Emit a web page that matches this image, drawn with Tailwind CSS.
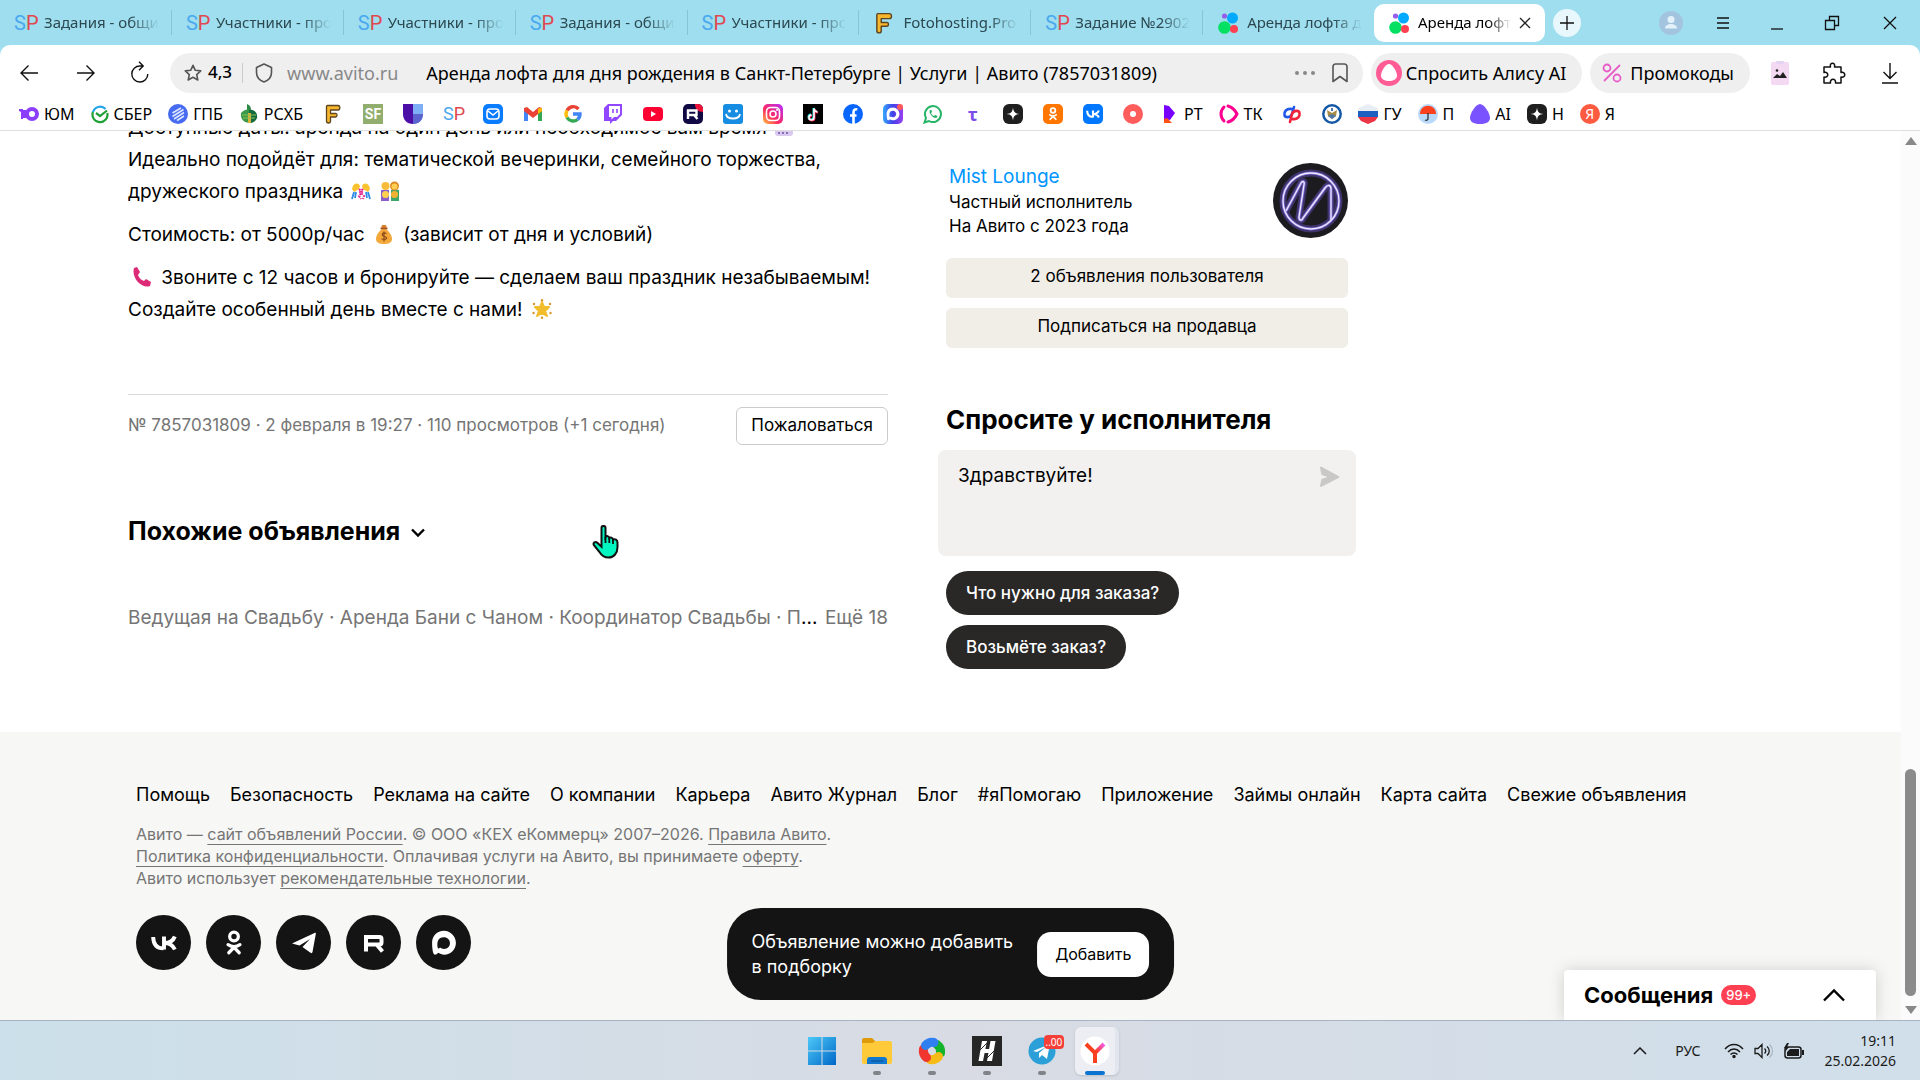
<!DOCTYPE html>
<html lang="ru">
<head>
    <meta charset="UTF-8">
    <meta name="viewport" content="width=device-width, initial-scale=1.0">
    <title>Аренда лофта для дня рождения в Санкт-Петербурге | Услуги | Авито</title>
    <script src="https://cdn.jsdelivr.net/npm/@tailwindcss/browser@4"></script>
</head>
<body class="h-screen flex flex-col overflow-hidden bg-white text-black font-['Inter','Noto_Sans',sans-serif]">

    <!-- Shared icons -->
    <svg class="hidden">
        <symbol id="avito" viewBox="0 0 20 22">
            <circle cx="6.5" cy="15.5" r="6.3" fill="#04e061"/>
            <circle cx="14.5" cy="6" r="5.5" fill="#00aaff"/>
            <circle cx="16" cy="17" r="4" fill="#ff4053"/>
            <circle cx="6.5" cy="4" r="2.6" fill="#965eeb"/>
        </symbol>
        <symbol id="fotohost" viewBox="0 0 20 20">
            <path d="M4.500 1.500q-1 0-1 1V17q0 2 2 2t2-2v-4h5q1.500 0 1.500-1.800T12.500 9.500h-5V6H15q1.800 0 1.800-2.200T15 1.500z" fill="#f8b62d" stroke="#5b4520" stroke-width="1.300" stroke-linejoin="round"/>
        </symbol>
        <symbol id="vk" viewBox="0 0 24 24">
            <path d="M2 6.500c.2 7 3.500 10.500 9.400 10.500M12 6v12M22 6c-1.500 4-5 6-10 6 5 0 8 1.500 10 6" fill="none" stroke="currentColor" stroke-width="3.600"/>
        </symbol>
        <symbol id="ok" viewBox="0 0 24 24">
            <g fill="none" stroke="currentColor" stroke-width="3" stroke-linecap="round">
                <circle cx="12" cy="6" r="4"/>
                <path d="M6.500 13.500c3.500 2.400 7.500 2.400 11 0M12 16l-4.800 5M12 16l4.800 5"/>
            </g>
        </symbol>
        <symbol id="max" viewBox="0 0 24 24">
            <path d="M12 .8C5.500.8 1 5.500 1 12c0 4 .6 10.800 2.600 10.800 1.200 0 2.500-1 3.300-1.700 1.500.9 3.100 1.700 5.300 1.700 6 0 10.800-4.800 10.800-10.800S18 .8 12 .8zm.3 16.700c-2 0-2.900-.5-4-1.300-.6.8-1.900 1.500-2 .4-1-3.800-.7-10 5.700-10 3 0 5.500 2.300 5.500 5.500s-2.400 5.400-5.200 5.400z" fill="currentColor" fill-rule="evenodd"/>
        </symbol>
        <symbol id="spark" viewBox="0 0 20 20">
            <rect width="20" height="20" rx="6" fill="#1f1f1f"/>
            <path d="M10 3.500c.5 4.500 2 6 6.500 6.500-4.500.5-6 2-6.500 6.500-.5-4.500-2-6-6.500-6.500 4.500-.5 6-2 6.500-6.500z" fill="#fff"/>
        </symbol>
    </svg>

    <!-- Browser -->
    <header class="shrink-0 bg-[#9edeee] font-['Noto_Sans','Open_Sans',sans-serif]">
        <div class="flex items-center h-[45px]">
            <nav class="flex items-center w-[1374px] text-[15px] text-[#2c4850]">
                <button class="flex items-center gap-2 flex-1 min-w-0 h-[25px] pl-[14px] pr-3 border-r border-[#84c6d6]"><span class="w-[22px] text-xl leading-6 font-['Roboto']"><span class="text-[#4aa9ee]">S</span><span class="text-[#e04850]">P</span></span><span class="flex-1 text-left overflow-hidden whitespace-nowrap [mask-image:linear-gradient(to_right,#000_75%,transparent)]">Задания - общий</span></button>
                <button class="flex items-center gap-2 flex-1 min-w-0 h-[25px] pl-[14px] pr-3 border-r border-[#84c6d6]"><span class="w-[22px] text-xl leading-6 font-['Roboto']"><span class="text-[#4aa9ee]">S</span><span class="text-[#e04850]">P</span></span><span class="flex-1 text-left overflow-hidden whitespace-nowrap [mask-image:linear-gradient(to_right,#000_75%,transparent)]">Участники - про</span></button>
                <button class="flex items-center gap-2 flex-1 min-w-0 h-[25px] pl-[14px] pr-3 border-r border-[#84c6d6]"><span class="w-[22px] text-xl leading-6 font-['Roboto']"><span class="text-[#4aa9ee]">S</span><span class="text-[#e04850]">P</span></span><span class="flex-1 text-left overflow-hidden whitespace-nowrap [mask-image:linear-gradient(to_right,#000_75%,transparent)]">Участники - про</span></button>
                <button class="flex items-center gap-2 flex-1 min-w-0 h-[25px] pl-[14px] pr-3 border-r border-[#84c6d6]"><span class="w-[22px] text-xl leading-6 font-['Roboto']"><span class="text-[#4aa9ee]">S</span><span class="text-[#e04850]">P</span></span><span class="flex-1 text-left overflow-hidden whitespace-nowrap [mask-image:linear-gradient(to_right,#000_75%,transparent)]">Задания - общий</span></button>
                <button class="flex items-center gap-2 flex-1 min-w-0 h-[25px] pl-[14px] pr-3 border-r border-[#84c6d6]"><span class="w-[22px] text-xl leading-6 font-['Roboto']"><span class="text-[#4aa9ee]">S</span><span class="text-[#e04850]">P</span></span><span class="flex-1 text-left overflow-hidden whitespace-nowrap [mask-image:linear-gradient(to_right,#000_75%,transparent)]">Участники - про</span></button>
                <button class="flex items-center gap-2 flex-1 min-w-0 h-[25px] pl-[14px] pr-3 border-r border-[#84c6d6]"><svg class="w-[22px] h-6 shrink-0"><use href="#fotohost"/></svg><span class="flex-1 text-left overflow-hidden whitespace-nowrap [mask-image:linear-gradient(to_right,#000_75%,transparent)]">Fotohosting.Pro</span></button>
                <button class="flex items-center gap-2 flex-1 min-w-0 h-[25px] pl-[14px] pr-3 border-r border-[#84c6d6]"><span class="w-[22px] text-xl leading-6 font-['Roboto']"><span class="text-[#4aa9ee]">S</span><span class="text-[#e04850]">P</span></span><span class="flex-1 text-left overflow-hidden whitespace-nowrap [mask-image:linear-gradient(to_right,#000_75%,transparent)]">Задание №2902</span></button>
                <button class="flex items-center gap-2 flex-1 min-w-0 h-[25px] pl-[14px] pr-3"><svg class="w-[22px] h-[22px] shrink-0"><use href="#avito"/></svg><span class="flex-1 text-left overflow-hidden whitespace-nowrap [mask-image:linear-gradient(to_right,#000_75%,transparent)]">Аренда лофта для</span></button>
            </nav>
            <div class="flex items-center gap-2 w-[171px] h-[38px] pl-[14px] pr-[14px] rounded-[10px] bg-white text-[15px]">
                <svg class="w-[22px] h-[22px] shrink-0"><use href="#avito"/></svg>
                <span class="flex-1 overflow-hidden whitespace-nowrap [mask-image:linear-gradient(to_right,#000_75%,transparent)]">Аренда лофта</span>
                <button aria-label="Закрыть вкладку"><svg class="size-3" viewBox="0 0 12 12" fill="none" stroke="#222" stroke-width="1.300"><path d="M1 1l10 10M11 1L1 11"/></svg></button>
            </div>
            <button aria-label="Новая вкладка" class="flex items-center justify-center size-7 ml-2 rounded-full bg-white/75"><svg class="size-4" viewBox="0 0 16 16" stroke="#111" stroke-width="1.300"><path d="M8 1v14M1 8h14"/></svg></button>
            <div class="flex items-center justify-between flex-1 pl-[78px] pr-[22px]">
                <button aria-label="Профиль"><svg class="size-6" viewBox="0 0 24 24"><circle cx="12" cy="12" r="12" fill="#a3c4de"/><circle cx="12" cy="8.500" r="3.500" fill="#e3f2fa"/><path d="M6 17.500c0-6 12-6 12 0z" fill="#e3f2fa"/></svg></button>
                <button aria-label="Меню" class="-ml-2"><svg class="w-3 h-4" viewBox="0 0 12 16" stroke="#111" stroke-width="1.300"><path d="M0 3h12M0 8h12M0 13h12"/></svg></button>
                <button aria-label="Свернуть"><svg class="w-3 h-4" viewBox="0 0 12 16" stroke="#111" stroke-width="1.300"><path d="M0 14h12"/></svg></button>
                <button aria-label="Окно"><svg class="size-4" viewBox="0 0 16 16" fill="none" stroke="#111" stroke-width="1.300"><path d="M1.500 5.500h9v9h-9zM5.500 5V1.500h9v9H11"/></svg></button>
                <button aria-label="Закрыть"><svg class="size-4" viewBox="0 0 16 16" stroke="#111" stroke-width="1.300"><path d="M2 2l12 12M14 2L2 14"/></svg></button>
            </div>
        </div>

        <!-- Address bar -->
        <div class="rounded-t-[10px] bg-white border-b border-[#dedede] h-[86px]">
            <div class="flex items-center h-[55px] pl-[18px] pr-[18px] text-lg">
                <button aria-label="Назад"><svg class="size-6" viewBox="0 0 24 24" fill="none" stroke="#111" stroke-width="1.400"><path d="M20 12H3M10.500 4.500L3 12l7.500 7.500"/></svg></button>
                <button aria-label="Вперёд" class="ml-8"><svg class="size-6" viewBox="0 0 24 24" fill="none" stroke="#111" stroke-width="1.400"><path d="M3 12h17M12.500 4.500L20 12l-7.500 7.500"/></svg></button>
                <button aria-label="Обновить" class="ml-[30px]"><svg class="size-6" viewBox="0 0 24 24" fill="none" stroke="#111" stroke-width="1.400"><path d="M19.800 13A8 8 0 1 1 12 5h3M11 .8L15.200 5 11 9.200"/></svg></button>
                <div class="flex items-center flex-1 h-10 ml-[18px] pl-3.5 pr-3.5 rounded-full bg-[#efefef]">
                    <svg class="size-[18px]" viewBox="0 0 18 18" fill="none" stroke="#555" stroke-width="1.600" stroke-linejoin="round"><path d="M9 1.300l2.300 5 5.400.6-4 3.700 1.100 5.400L9 13.300 4.200 16l1.100-5.400-4-3.700 5.400-.6z"/></svg>
                    <span class="ml-1.5 text-[17px] font-medium">4,3</span>
                    <span class="w-px h-5 ml-2.5 bg-[#ccc]"></span>
                    <svg class="w-[18px] h-5 ml-3" viewBox="0 0 18 20" fill="none" stroke="#555" stroke-width="1.600" stroke-linejoin="round"><path d="M9 1l7.500 3.500v5c0 4.500-3.500 8-7.500 9.500-4-1.500-7.500-5-7.500-9.500v-5z"/></svg>
                    <label for="address" class="ml-3.5 text-[#888]">www.avito.ru</label>
                    <input id="address" type="text" class="flex-1 min-w-0 ml-7 bg-transparent outline-none" value="Аренда лофта для дня рождения в Санкт-Петербурге | Услуги | Авито (7857031809)">
                    <svg class="w-5 h-1" viewBox="0 0 20 4" fill="#888"><circle cx="2" cy="2" r="2"/><circle cx="10" cy="2" r="2"/><circle cx="18" cy="2" r="2"/></svg>
                    <svg class="w-[18px] h-5 ml-4" viewBox="0 0 18 20" fill="none" stroke="#555" stroke-width="1.600" stroke-linejoin="round"><path d="M2 18.500V3.500a2.500 2.500 0 0 1 2.500-2.500h9A2.500 2.500 0 0 1 16 3.500v15l-7-5z"/></svg>
                </div>
                <button class="flex items-center gap-1 h-10 ml-2 pl-[5px] pr-4 rounded-full bg-[#efefef]"><svg class="size-[26px]" viewBox="0 0 26 26"><circle cx="13" cy="13" r="13" fill="#ff5c96"/><path d="M13 4c3.500 0 8 8 8 11.500 0 4-4 5.500-8 5.500s-8-1.500-8-5.500S9.500 4 13 4z" fill="#fff"/></svg>Спросить Алису AI</button>
                <button class="flex items-center gap-2 h-10 ml-2 pl-3 pr-4 rounded-full bg-[#efefef]"><svg class="size-5" viewBox="0 0 20 20" fill="none" stroke="#e85cc8" stroke-width="1.800"><circle cx="5" cy="5" r="3.500"/><circle cx="15" cy="15" r="3.500"/><path d="M18 2L2 18"/></svg>Промокоды</button>
                <svg class="w-5 h-6 ml-5" viewBox="0 0 20 24"><rect x="1" y="1" width="18" height="23" rx="2" fill="#f3d9f2"/><rect x="6" width="8" height="3" rx="1" fill="#e2d3f3"/><path d="M3 17l4-4 3 2 3-4 4 6z" fill="#222"/><circle cx="7" cy="9.500" r="1.300" fill="#222"/></svg>
                <button aria-label="Расширения" class="ml-8"><svg class="size-6" viewBox="0 0 24 24" fill="none" stroke="#111" stroke-width="1.500" stroke-linejoin="round"><path d="M2 6h6.500C7 1 14 1 12.500 6H19v5.500c5-1.500 5 6 0 4.500V22h-5.500c1-5-6-5-5 0H2v-6c5 1.500 5-6 0-4.500z"/></svg></button>
                <button aria-label="Загрузки" class="ml-8"><svg class="size-6" viewBox="0 0 24 24" fill="none" stroke="#111" stroke-width="1.400"><path d="M12 2v15M5.500 11l6.500 6.500 6.500-6.500M4 22h16"/></svg></button>
            </div>

            <!-- Bookmarks -->
            <nav class="flex items-center gap-4 h-7 px-[19px] text-base">
                <a href="#" class="flex items-center gap-[5px]"><svg class="size-5" viewBox="0 0 20 20"><circle cx="13" cy="10" r="5" fill="none" stroke="#8b3ffd" stroke-width="4"/><path d="M0 5h4v10H2V8L0 7zM4 6h3v8H4z" fill="#8b3ffd"/></svg>ЮМ</a>
                <a href="#" class="flex items-center gap-[5px]"><svg class="w-[18px] h-5" viewBox="1 0 18 20" fill="none" stroke-width="2.200"><path d="M15.500 5A7.500 7.500 0 0 0 3 8" stroke="#1fa5e8"/><path d="M3 8a7.500 7.500 0 1 0 14.300 1" stroke="#21a038"/><path d="M6 9l4 3 7-5.500" stroke="#21a038"/></svg>СБЕР</a>
                <a href="#" class="flex items-center gap-[5px]"><svg class="size-5" viewBox="0 0 20 20"><circle cx="10" cy="10" r="10" fill="#476bf0"/><path d="M4.500 9L13 4M4.500 12.500l11-7M6 15l10-6.500M9 16.500l7-4.500" stroke="#dfe7ff" stroke-width="1.500"/></svg>ГПБ</a>
                <a href="#" class="flex items-center gap-[5px]"><svg class="size-5" viewBox="0 0 20 20"><path d="M8 0c3 1 4 3 4 6H8z" fill="#2a8a45"/><path d="M2 9c3-4 8-4 9-3v13C5 19 1 15 2 9z" fill="#3b9a4a"/><path d="M10 6c5-1 9 3 8 8-1 3-4 5-8 5z" fill="#126b3c"/><path d="M9 9h3v10H9z" fill="#d8b03b"/><path d="M3 11h14M4 14h12" stroke="#8cc152"/></svg>РСХБ</a>
                <a href="#" aria-label="Fotohosting" class="pl-1"><svg class="size-5"><use href="#fotohost"/></svg></a>
                <a href="#" class="pl-1"><span class="flex items-center justify-center size-5 bg-[#92ae6e] text-white text-sm font-bold font-['Roboto']">SF</span></a>
                <a href="#" aria-label="U" class="pl-1"><svg class="size-5" viewBox="0 0 20 20"><path d="M0 0h10v20C4 20 0 16 0 10z" fill="#4b0fa8"/><path d="M10 0h10v10c0 6-4 10-10 10z" fill="#7eaef5"/><path d="M10 10h10c0 6-4 10-10 10z" fill="#5c63cf"/></svg></a>
                <a href="#" class="pl-1"><span class="block w-5 text-lg leading-5 font-['Roboto']"><span class="text-[#4aa9ee]">S</span><span class="text-[#e04850]">P</span></span></a>
                <a href="#" aria-label="Почта" class="pl-1"><svg class="size-5" viewBox="0 0 20 20"><rect width="20" height="20" rx="5" fill="#0a7cff"/><rect x="4" y="5" width="12" height="10" rx="3" fill="none" stroke="#fff" stroke-width="1.600"/><path d="M5 7l5 4 5-4" fill="none" stroke="#fff" stroke-width="1.600"/></svg></a>
                <a href="#" aria-label="Gmail" class="pl-1"><svg class="size-5" viewBox="0 0 20 20"><path d="M1 5h4v12H1z" fill="#4285f4"/><path d="M15 5h4v12h-4z" fill="#34a853"/><path d="M1 4l3-1 6 5 6-5 3 1v3l-9 7-9-7z" fill="#ea4335"/><path d="M15 4.500L19 4v3l-4 3z" fill="#fbbc04"/></svg></a>
                <a href="#" aria-label="Google" class="pl-1"><svg class="size-5" viewBox="0 0 20 20" fill="none" stroke-width="3.400"><path d="M15.500 5A7 7 0 0 0 4 6.500" stroke="#ea4335"/><path d="M4 6.500a7 7 0 0 0 0 7" stroke="#fbbc05"/><path d="M4 13.500A7 7 0 0 0 14.500 15.500" stroke="#34a853"/><path d="M14.500 15.500A7 7 0 0 0 17 10h-7" stroke="#4285f4"/></svg></a>
                <a href="#" aria-label="Twitch" class="pl-1"><svg class="size-5" viewBox="0 0 20 20"><path d="M5 0h14v11l-6 6h-3l-3 3v-3H1V4z" fill="#9146ff"/><path d="M6 2h11v8l-3 3h-3l-2.500 2.500V13H6z" fill="#fff"/><path d="M10 5v4M14 5v4" stroke="#9146ff" stroke-width="1.600"/></svg></a>
                <a href="#" aria-label="YouTube" class="pl-1"><svg class="size-5" viewBox="0 0 20 20"><rect y="3" width="20" height="14" rx="4" fill="#ff0033"/><path d="M8 7l5 3-5 3z" fill="#fff"/></svg></a>
                <a href="#" aria-label="Rutube" class="pl-1"><svg class="size-5" viewBox="0 0 20 20"><rect width="20" height="20" rx="5" fill="#100943"/><path d="M12 0h3a5 5 0 0 1 5 5v3c-5 0-8-3-8-8z" fill="#ed143b"/><path d="M5 15V6.500h8.500v4.500H5M11 11l3.500 4" fill="none" stroke="#fff" stroke-width="2.400"/></svg></a>
                <a href="#" aria-label="Смайл" class="pl-1"><svg class="size-5" viewBox="0 0 20 20"><rect width="20" height="20" rx="3" fill="#168de2"/><circle cx="6.500" cy="7" r="1.500" fill="#fff"/><circle cx="13.500" cy="7" r="1.500" fill="#fff"/><path d="M3 10c1 6 13 6 14 0" fill="none" stroke="#fff" stroke-width="1.800"/></svg></a>
                <a href="#" aria-label="Instagram" class="pl-1"><svg class="size-5" viewBox="0 0 20 20"><defs><linearGradient id="insta" x1="0" y1="1" x2="1" y2="0"><stop stop-color="#ffc83d"/><stop offset=".4" stop-color="#ff2b5e"/><stop offset="1" stop-color="#b52dff"/></linearGradient></defs><rect width="20" height="20" rx="5" fill="url(#insta)"/><g fill="none" stroke="#fff" stroke-width="1.600"><rect x="3.500" y="3.500" width="13" height="13" rx="4"/><circle cx="10" cy="10" r="3"/></g><circle cx="14" cy="6" r="1" fill="#fff"/></svg></a>
                <a href="#" aria-label="TikTok" class="pl-1"><svg class="size-5" viewBox="0 0 20 20"><path d="M0 0h20v20H0z"/><g fill="none" stroke-width="2"><path d="M10.500 4v9a2.500 2.500 0 1 1-2.500-2.500M10.500 4c.3 2 1.500 3.300 3.500 3.500" stroke="#25f4ee"/><path d="M11.500 5v9A2.500 2.500 0 1 1 9 11.500M11.500 5c.3 2 1.500 3.300 3.500 3.500" stroke="#fe2c55"/><path d="M11 4.500v9A2.500 2.500 0 1 1 8.500 11M11 4.500c.3 2 1.500 3.300 3.500 3.500" stroke="#fff" stroke-width="1.600"/></g></svg></a>
                <a href="#" aria-label="Facebook" class="pl-1"><svg class="size-5" viewBox="0 0 20 20"><circle cx="10" cy="10" r="10" fill="#0866ff"/><path d="M10.500 20V9c0-3 1-4 3.800-3.700M7 11.500h6.500" fill="none" stroke="#fff" stroke-width="2.600"/></svg></a>
                <a href="#" aria-label="MAX" class="pl-1"><svg class="size-5" viewBox="0 0 20 20"><defs><linearGradient id="maxg"><stop stop-color="#35a7ff"/><stop offset=".5" stop-color="#4340e8"/><stop offset="1" stop-color="#9a3ff0"/></linearGradient></defs><rect width="20" height="20" rx="5" fill="url(#maxg)"/><use href="#max" x="3" y="3" width="14" height="14" color="#fff"/><circle cx="17" cy="3" r="3" fill="#ff5a5a"/></svg></a>
                <a href="#" aria-label="WhatsApp" class="pl-1"><svg class="size-5" viewBox="0 0 20 20"><path d="M1.500 18.500L3 14A8 8 0 1 1 6 17z" fill="none" stroke="#25b366" stroke-width="2"/><path d="M7 6c-2 3 3 8.500 6.500 8l1-2-2.500-1-1 1C9.500 11.500 8.500 10.500 8 9l1-1-.7-2z" fill="#25b366"/></svg></a>
                <a href="#" class="pl-1"><span class="block w-5 text-center text-lg leading-5 font-bold text-[#7b4de8]">τ</span></a>
                <a href="#" aria-label="Spark" class="pl-1"><svg class="size-5"><use href="#spark"/></svg></a>
                <a href="#" aria-label="Одноклассники" class="pl-1"><svg class="size-5" viewBox="0 0 20 20"><rect width="20" height="20" rx="5" fill="#ff7700"/><use href="#ok" x="3" y="3" width="14" height="14" color="#fff"/></svg></a>
                <a href="#" aria-label="ВКонтакте" class="pl-1"><svg class="size-5" viewBox="0 0 20 20"><rect width="20" height="20" rx="5" fill="#0077ff"/><use href="#vk" x="3" y="3" width="14" height="14" color="#fff"/></svg></a>
                <a href="#" aria-label="Запись" class="pl-1"><svg class="size-5" viewBox="0 0 20 20"><circle cx="10" cy="10" r="10" fill="#ff5c5c"/><circle cx="10" cy="10" r="3" fill="#fff"/></svg></a>
                <a href="#" class="flex items-center gap-[5px]"><svg class="size-5" viewBox="0 0 20 20"><path d="M5 1l5 1 6 7-5 7-6-1z" fill="#7700ff"/><path d="M5 15l3-1 5 5H5z" fill="#ff4f12"/></svg>РТ</a>
                <a href="#" class="flex items-center gap-[5px]"><svg class="size-5" viewBox="0 0 20 20" fill="none" stroke="#ff0090" stroke-width="3" stroke-linecap="round"><path d="M5 3c-4 4-4 10 0 14M9 2c4 1 7 4 9 8-2 4-5 7-9 8"/></svg>ТК</a>
                <a href="#" aria-label="DP" class="pl-1"><svg class="size-5" viewBox="0 0 20 20" fill="none" stroke-width="2.600" stroke-linecap="round"><path d="M10 5C4 4 2 8 2.500 11s6 3 7.500-1l2-7" stroke="#2158e8"/><path d="M10 15c6 1 8-3 7.500-6s-6-3-7.500 1l-2 8" stroke="#f0243c"/></svg></a>
                <a href="#" aria-label="Герб" class="pl-1"><svg class="size-5" viewBox="0 0 20 20"><circle cx="10" cy="10" r="8.700" fill="#fff" stroke="#1558a6" stroke-width="2.500"/><path d="M5 6l5 3 5-3-1 6-4 3-4-3z" fill="#a98a45"/><path d="M9 4h2v3H9zM6 12l4 3 4-3-4-2z" fill="#5078a8"/></svg></a>
                <a href="#" class="flex items-center gap-[5px]"><svg class="size-5" viewBox="0 0 20 20"><path d="M0 4l10-4 10 4v3H0z" fill="#e9eef5"/><path d="M0 7h20v6H0z" fill="#1c5fc0"/><path d="M0 13h20l-3 4-7 3-7-3z" fill="#ea3546"/></svg>ГУ</a>
                <a href="#" class="flex items-center gap-[5px]"><svg class="size-5" viewBox="0 0 20 20"><circle cx="10" cy="10" r="10" fill="#b9d9fa"/><path d="M2 10c0-11 16-11 16 0z" fill="#fc3f1d"/><path d="M10 9v6a2 2 0 0 1-3 1" fill="none" stroke="#333" stroke-width="1.300"/></svg>П</a>
                <a href="#" class="flex items-center gap-[5px]"><svg class="size-5" viewBox="0 0 20 20"><path d="M10 0c4 0 10 9 10 14 0 4.500-5 6-10 6S0 18.500 0 14C0 9 6 0 10 0z" fill="#7b52ff"/></svg>AI</a>
                <a href="#" class="flex items-center gap-[5px]"><svg class="size-5"><use href="#spark"/></svg>Н</a>
                <a href="#" class="flex items-center gap-[5px]"><span class="flex items-center justify-center size-5 rounded-full bg-[#fc5a41] text-white text-sm">Я</span>Я</a>
            </nav>
        </div>
    </header>

    <!-- Page -->
    <div class="flex flex-1 min-h-0">
        <main class="relative flex flex-col flex-1 min-w-0 overflow-hidden">
            <div class="flex items-start gap-[58px] w-full max-w-[1645px] mx-auto pb-[63px]">
                <section class="w-[760px] -mt-[19px]">
                    <div class="space-y-[11px] text-[19px] leading-8 whitespace-nowrap">
                        <p>Доступные даты: аренда на один день или необходимое вам время
                            <svg class="inline size-5 align-[-3px] mx-0.5" viewBox="0 0 20 20"><rect x="1" y="1" width="18" height="18" rx="3" fill="#d9c9ef"/><path d="M4 8h12M4 12h12M4 16h12" stroke="#8a6fb8" stroke-width="2" stroke-dasharray="2 2"/></svg><br>
                            Идеально подойдёт для: тематической вечеринки, семейного торжества,<br>
                            дружеского праздника
                            <svg class="inline size-5 align-[-3px] mx-0.5" viewBox="0 0 20 20"><path d="M1 8c1-6 6-7 8-3l-1 3-5 3zM19 8c-1-6-6-7-8-3l1 3 5 3z" fill="#f9c22e"/><path d="M3 11l-2 7M5 11l-1 6M17 11l2 7M15 11l1 6" stroke="#2f8be6" stroke-width="1.800"/><path d="M8 8l3 3-3 4 2 3M12 8l-3 3 4 4-1 3" fill="none" stroke="#e3268f" stroke-width="2" stroke-dasharray="2 1"/></svg>
                            <svg class="inline size-5 align-[-3px] mx-0.5" viewBox="0 0 20 20"><path d="M1 9h8v11H1z" fill="#8a5fc9"/><path d="M11 9h8v11h-8z" fill="#3fa66b"/><circle cx="5.500" cy="5" r="4" fill="#f7bc3b"/><circle cx="14.500" cy="5" r="4.500" fill="#dc8a24"/><circle cx="14.500" cy="5.500" r="3" fill="#ffd056"/><circle cx="5.500" cy="13.500" r="3.500" fill="#ffcf4e"/><circle cx="14.500" cy="13.500" r="3.500" fill="#f4b233"/></svg>
                        </p>
                        <p>Стоимость: от 5000р/час
                            <svg class="inline size-5 align-[-3px] mx-1" viewBox="0 0 20 20"><path d="M8 1h4l1 3h-6z" fill="#d9822b"/><path d="M8 5h4c4 3 6 7 6 10 0 4-4 5-8 5s-8-1-8-5c0-3 2-7 6-10z" fill="#f5a83a"/><path d="M6.500 4.500h7" stroke="#a5522a" stroke-width="1.500"/><path d="M12.500 9.500c-4-2-6 2-2 3s2 4-3 2.500M10 7.500v10" fill="none" stroke="#8c4a1c" stroke-width="1.200"/></svg>
                            (зависит от дня и условий)</p>
                        <p><svg class="inline size-5 align-[-3px] mx-1" viewBox="0 0 20 20"><path d="M2 1l3-1 3 5-2 3c1 3 3 5 6 6l2-2 5 3-1 4c-8 3-19-8-16-18z" fill="#dc2a77"/></svg>
                            Звоните с 12 часов и бронируйте — сделаем ваш праздник незабываемым!<br>
                            Создайте особенный день вместе с нами!
                            <svg class="inline size-5 align-[-3px] mx-1" viewBox="0 0 20 20"><path d="M10 3l2 5 5 0-4 4 2 5-5-3-5 3 2-5-4-4h5z" fill="#f1bd2c" stroke="#f1bd2c" stroke-width="2" stroke-linejoin="round"/><g fill="#d8952a"><circle cx="10" cy="1.200" r="1.200"/><circle cx="2" cy="5" r="1.200"/><circle cx="18" cy="5" r="1.200"/><circle cx="1.500" cy="14" r="1.200"/><circle cx="18.500" cy="14" r="1.200"/><circle cx="10" cy="18.800" r="1.200"/></g></svg></p>
                    </div>

                    <div class="flex items-center justify-between mt-[68px] pt-3 border-t border-[#dcdcdc]">
                        <p class="text-[17px] text-[#757575]">№ 7857031809 · 2 февраля в 19:27 · 110 просмотров (+1 сегодня)</p>
                        <button class="h-[38px] px-3.5 rounded-md border border-[#ccc] text-[17px]">Пожаловаться</button>
                    </div>

                    <h2 class="flex items-center gap-2.5 mt-[70px] text-[25px] leading-8 font-bold">Похожие объявления
                        <svg class="w-4 h-3 mt-1" viewBox="0 0 16 12" fill="none" stroke="#000" stroke-width="2.400"><path d="M2 2.500l6 6 6-6"/></svg>
                    </h2>

                    <p class="flex justify-between mt-[55px] text-[19px] leading-8 whitespace-nowrap text-[#757575]">
                        <span><a href="#">Ведущая на Свадьбу</a> · <a href="#">Аренда Бани с Чаном</a> · <a href="#">Координатор Свадьбы</a> · П<span class="text-black">...</span></span>
                        <a href="#">Ещё 18</a>
                    </p>
                </section>

                <aside class="w-[402px] pt-8">
                    <div class="flex justify-between pl-[3px]">
                        <div class="pt-px text-[17px] leading-6">
                            <a href="#" class="block text-[19px] leading-[26px] text-[#0095ff]">Mist Lounge</a>
                            <p>Частный исполнитель</p>
                            <p>На Авито с 2023 года</p>
                        </div>
                        <svg class="size-[75px]" viewBox="0 0 75 75" fill="none">
                            <circle cx="37.500" cy="37.500" r="37.500" fill="#1c1b20"/>
                            <g stroke="#5a48a8" stroke-width="7" opacity=".55"><circle cx="38" cy="38" r="28"/><path d="M13 48L28 20c2-3 4-1 3 2l-5 32c0 4 3 4 4 1l22-30c3-4 6-3 6 1v31"/></g>
                            <g stroke="#7c6bd0" stroke-width="3"><circle cx="38" cy="38" r="28"/><path d="M13 48L28 20c2-3 4-1 3 2l-5 32c0 4 3 4 4 1l22-30c3-4 6-3 6 1v31"/></g>
                            <g stroke="#efeaff" stroke-width="1.300"><circle cx="38" cy="38" r="28"/><path d="M13 48L28 20c2-3 4-1 3 2l-5 32c0 4 3 4 4 1l22-30c3-4 6-3 6 1v31"/></g>
                        </svg>
                    </div>
                    <div class="flex flex-col gap-2.5 mt-5 text-[17px]">
                        <button class="h-10 pb-0.5 rounded-md bg-[#f1eee7]">2 объявления пользователя</button>
                        <button class="h-10 pb-0.5 rounded-md bg-[#f1eee7]">Подписаться на продавца</button>
                    </div>

                    <h2 class="mt-[54px] text-[26px] leading-9 font-bold whitespace-nowrap"><label for="question">Спросите у исполнителя</label></h2>
                    <div class="flex items-start h-[106px] mt-3 -mx-2 pl-5 pr-4 pt-2.5 rounded-lg bg-[#f2f1ef]">
                        <textarea id="question" class="flex-1 h-20 pt-px text-[19px] leading-[30px] resize-none outline-none">Здравствуйте!</textarea>
                        <button aria-label="Отправить" class="mt-1.5"><svg class="size-[22px]" viewBox="0 0 22 22"><path d="M2 1.500c0-1 1-1 1.500-.7L21 10.300c.7.400.7 1 0 1.400L3.500 20.700C3 21 2 21 2 20l1.500-7 6-2-6-2z" fill="#c9c8c6"/></svg></button>
                    </div>
                    <div class="flex flex-col items-start gap-2.5 mt-[15px] text-[17px] font-medium text-white">
                        <button class="h-11 px-5 pt-0.5 rounded-full bg-[#292827]">Что нужно для заказа?</button>
                        <button class="h-11 px-5 pt-0.5 rounded-full bg-[#292827]">Возьмёте заказ?</button>
                    </div>
                </aside>
            </div>

            <footer class="flex-1 bg-[#f7f7f5]">
                <div class="max-w-[1645px] mx-auto pt-[51px] pl-2">
                    <nav class="flex gap-5 text-[18px] leading-6 whitespace-nowrap">
                        <a href="#">Помощь</a>
                        <a href="#">Безопасность</a>
                        <a href="#">Реклама на сайте</a>
                        <a href="#">О компании</a>
                        <a href="#">Карьера</a>
                        <a href="#">Авито Журнал</a>
                        <a href="#">Блог</a>
                        <a href="#">#яПомогаю</a>
                        <a href="#">Приложение</a>
                        <a href="#">Займы онлайн</a>
                        <a href="#">Карта сайта</a>
                        <a href="#">Свежие объявления</a>
                    </nav>
                    <p class="mt-4 text-base leading-[22px] text-[#757575]">
                        Авито — <a href="#" class="underline underline-offset-4">сайт объявлений России</a>. © ООО «КЕХ еКоммерц» 2007–2026. <a href="#" class="underline underline-offset-4">Правила Авито</a>.<br>
                        <a href="#" class="underline underline-offset-4">Политика конфиденциальности</a>. Оплачивая услуги на Авито, вы принимаете <a href="#" class="underline underline-offset-4">оферту</a>.<br>
                        Авито использует <a href="#" class="underline underline-offset-4">рекомендательные технологии</a>.
                    </p>
                    <div class="flex gap-[15px] mt-[26px] text-white">
                        <a href="#" aria-label="ВКонтакте" class="flex items-center justify-center size-[55px] rounded-full bg-[#141414]"><svg class="size-[26px]"><use href="#vk"/></svg></a>
                        <a href="#" aria-label="Одноклассники" class="flex items-center justify-center size-[55px] rounded-full bg-[#141414]"><svg class="size-[26px]"><use href="#ok"/></svg></a>
                        <a href="#" aria-label="Telegram" class="flex items-center justify-center size-[55px] rounded-full bg-[#141414]"><svg class="size-6" viewBox="0 0 24 24" fill="#fff"><path d="M0 12.500L22.500 2c1-.4 1.500 0 1.300 1L20.500 21c-.2 1.200-1 1.500-2 .8l-8-5.800 7.500-8-10.500 6.500z"/></svg></a>
                        <a href="#" aria-label="Rutube" class="flex items-center justify-center size-[55px] rounded-full bg-[#141414]"><svg class="w-[22px] h-5" viewBox="0 0 22 20" fill="none" stroke="#fff" stroke-width="4"><path d="M3 18.500V4h13.500q2 0 2 2v3.500q0 2-2 2H3M14 12l5.500 6.500"/></svg></a>
                        <a href="#" aria-label="MAX" class="flex items-center justify-center size-[55px] rounded-full bg-[#141414]"><svg class="size-[26px]"><use href="#max"/></svg></a>
                    </div>
                </div>
            </footer>

            <!-- Toast -->
            <div class="absolute bottom-5 left-1/2 -translate-x-1/2 flex items-center gap-6 h-[92px] px-[25px] rounded-[34px] bg-[#141414] text-white text-[18px] leading-[25px] whitespace-nowrap">
                <p>Объявление можно добавить<br>в подборку</p>
                <button class="h-[45px] px-[18px] rounded-[14px] bg-white text-base text-black">Добавить</button>
            </div>

            <!-- Messenger -->
            <button class="absolute bottom-0 right-[25px] flex items-center w-[312px] h-[50px] pl-5 pr-[30px] rounded-t bg-white shadow-[0_0_16px_rgba(0,0,0,0.16)] text-[22px] font-bold">
                Сообщения
                <span class="ml-2 px-[5px] rounded-full bg-[#ff4053] text-[13px] leading-5 font-medium text-white">99+</span>
                <svg class="w-6 h-4 ml-auto" viewBox="0 0 24 16" fill="none" stroke="#000" stroke-width="2.400"><path d="M2 13.500l10-10 10 10"/></svg>
            </button>

            <!-- Hand cursor -->
            <svg class="absolute left-[592px] top-[394px] w-[27px] h-[34px]" viewBox="0 0 27 34"><path d="M9.500 3c0-2.700 4-2.700 4 0v9c1-1.500 3.500-1 3.800 1 1.200-1 3.300-.5 3.700 1.500 2-1 4.500.3 4.500 3V22c0 6-3.500 10.500-9 10.500-4 0-7-2-9-5.500L1.800 20c-1-2.500 1.700-4 3.500-2.300l4.200 4z" fill="#00f5c0" stroke="#111" stroke-width="2"/><path d="M13.500 12v6M17.300 13v5M21 14.500V19" stroke="#111" stroke-width="1.800"/></svg>
        </main>

        <!-- Scrollbar -->
        <div class="flex flex-col items-center w-[19px] py-1.5 bg-[#fbfbfb]">
            <svg class="w-3 h-2" viewBox="0 0 12 8" fill="#888"><path d="M6 0l6 8H0z"/></svg>
            <span class="flex-1"></span>
            <span class="w-[11px] h-[227px] mb-2.5 rounded-full bg-[#8b8b8b]"></span>
            <svg class="w-3 h-2" viewBox="0 0 12 8" fill="#888"><path d="M0 0h12L6 8z"/></svg>
        </div>
    </div>

    <!-- Taskbar -->
    <div class="flex items-center shrink-0 h-[60px] border-t border-[#a9b4c2] bg-linear-to-r from-[#cbe0ea] via-[#d8dbe4] to-[#d0dfea] font-['Noto_Sans',sans-serif]">
        <div class="flex-1"></div>
        <div class="flex items-center gap-[11px] pl-[22px]">
            <button aria-label="Пуск" class="flex flex-col items-center w-11"><svg class="size-[30px]" viewBox="0 0 30 30"><defs><linearGradient id="win" x1="0" y1="0" x2="1" y2="1"><stop stop-color="#4cc9f7"/><stop offset="1" stop-color="#0067c8"/></linearGradient></defs><path d="M1 1h13.500v13.500H1zM15.500 1H29v13.500H15.500zM1 15.500h13.500V29H1zM15.500 15.500H29V29H15.500z" fill="url(#win)"/></svg></button>
            <button aria-label="Проводник" class="flex flex-col items-center justify-end gap-[5px] w-11 h-12"><svg class="size-[30px]" viewBox="0 0 30 30"><path d="M0 4q0-2 2-2h8l3 3v5H0z" fill="#dd9b0b"/><path d="M0 7h11l2-2h15q2 0 2 2v19q0 2-2 2H2q-2 0-2-2z" fill="#ffca3a"/><path d="M5 24q0-3 3-3h14q3 0 3 3v4H5z" fill="#1177cf"/><path d="M9 25h12" stroke="#0a4d8f"/></svg><span class="w-2 h-1 rounded-full bg-[#808388]"></span></button>
            <button aria-label="Браузер" class="flex flex-col items-center justify-end gap-[5px] w-11 h-12"><svg class="size-[30px]" viewBox="0 0 30 30" fill="none" stroke-width="9" stroke-linecap="round"><path d="M20 8.500A9 9 0 0 1 23.500 17" stroke="#13b32c"/><path d="M21.500 20.500A9 9 0 0 1 13 23.500" stroke="#f7bb18"/><path d="M9.500 21.500A9 9 0 0 1 6.500 13" stroke="#f0362e"/><path d="M8.500 9.500a9 9 0 0 1 8.500-3" stroke="#2f7ff0"/></svg><span class="w-2 h-1 rounded-full bg-[#808388]"></span></button>
            <button aria-label="H" class="flex flex-col items-center justify-end gap-[5px] w-11 h-12"><svg class="size-[30px]" viewBox="0 0 30 30"><path d="M0 0h30v30H0z" fill="#262626"/><path d="M10 5h5l-4 20H6.500zM18.500 5h5L20 25h-5zM10 13h9v4h-9z" fill="#fff"/><path d="M7 15l8-8M15 22l8-8" stroke="#262626"/></svg><span class="w-2 h-1 rounded-full bg-[#808388]"></span></button>
            <button aria-label="Telegram" class="relative flex flex-col items-center justify-end gap-[5px] w-11 h-12"><svg class="size-[30px]" viewBox="0 0 30 30"><circle cx="15" cy="15" r="13.500" fill="#2a9fd8"/><path d="M6 15l17-7-3 15-5-4-3 3v-5l7-6-9 5z" fill="#fff"/></svg><span class="w-2 h-1 rounded-full bg-[#808388]"></span><span class="absolute left-6 top-2 px-0.5 rounded bg-[#f5403a] text-[10px] leading-[14px] text-white">..00</span></button>
            <button aria-label="Яндекс Браузер" class="flex flex-col items-center justify-end gap-[5px] w-11 h-12 rounded-md border-r-4 border-[#e1e5ed] bg-[#eceef3] shadow-sm"><svg class="size-[30px]" viewBox="0 0 30 30"><defs><linearGradient id="ya" gradientUnits="userSpaceOnUse" x1="6" y1="20" x2="24" y2="8"><stop offset=".5" stop-color="#fc3f1d"/><stop offset="1" stop-color="#f45cf0"/></linearGradient></defs><circle cx="15" cy="15" r="14.500" fill="#fff"/><path d="M6 8l9 9 9-9M15 16v11" fill="none" stroke="url(#ya)" stroke-width="4"/></svg><span class="w-5 h-1 rounded-full bg-[#0b74d1]"></span></button>
        </div>
        <div class="flex items-center justify-end flex-1 pr-6 text-sm text-[#1b1b1b]">
            <svg class="w-3.5 h-2" viewBox="0 0 14 8" fill="none" stroke="#1b1b1b" stroke-width="1.500"><path d="M1 7l6-6 6 6"/></svg>
            <span class="ml-7">РУС</span>
            <svg class="w-5 h-4 ml-6" viewBox="0 0 20 16" fill="none" stroke="#1b1b1b" stroke-width="1.500"><path d="M1 6c5-6 13-6 18 0M4 9c3.500-4 8.500-4 12 0M6.500 11.500c2-2 5-2 7 0"/><circle cx="10" cy="13.500" r="1" fill="#1b1b1b"/></svg>
            <svg class="w-5 h-4 ml-2.5" viewBox="0 0 20 16" fill="none" stroke="#1b1b1b" stroke-width="1.300"><path d="M1 5.500h3l4-4v13l-4-4H1zM10.500 5.500c1.500 1.500 1.500 3.500 0 5M13 3.500c3 2.500 3 6.500 0 9"/><path d="M15.500 1.500c4 4 4 9 0 13" stroke="#a9b4bf"/></svg>
            <svg class="w-5 h-4 ml-2.5" viewBox="0 0 20 16"><rect x="1" y="4" width="16" height="11" rx="2.500" fill="none" stroke="#1b1b1b" stroke-width="1.500"/><path d="M6 6h9v7H3V9zM18 7h2v5h-2zM3 0L0 5h2L1 9l4-5H3l2-4z" fill="#1b1b1b"/></svg>
            <p class="ml-5 text-right leading-5">19:11<br>25.02.2026</p>
        </div>
    </div>

</body>
</html>
